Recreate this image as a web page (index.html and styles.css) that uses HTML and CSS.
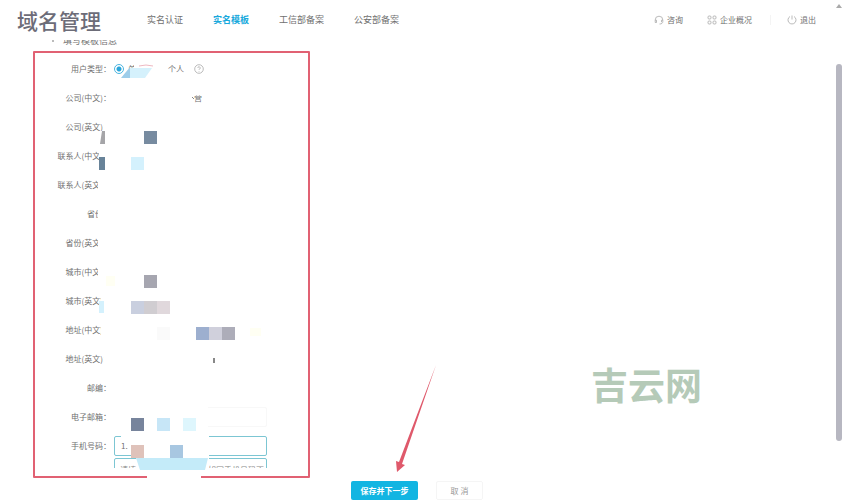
FILE: index.html
```
<!DOCTYPE html>
<html lang="zh-CN">
<head>
  <meta charset="UTF-8">
  <meta name="viewport" content="width=device-width, initial-scale=1.0">
  <title>域名管理 - 实名模板</title>
  <link rel="stylesheet" href="styles.css">
</head>
<body>
  <header class="header">
    <h1 class="logo">域名管理</h1>
    <nav class="nav">
      <a href="#">实名认证</a>
      <a href="#" class="active">实名模板</a>
      <a href="#">工信部备案</a>
      <a href="#">公安部备案</a>
    </nav>
    <div class="tools">
      <a href="#">
        <svg class="icon" viewBox="0 0 10 10"><path d="M2.500 7.500H1.200V5a3.800 3.800 0 0 1 7.600 0v1.500C8.800 8.300 7.500 9 5.500 9M1.200 5.200h1.300v2.300M8.800 5.200H7.500v2"/></svg>
        咨询
      </a>
      <a href="#">
        <svg class="icon" viewBox="0 0 10 10"><rect x="1" y="1" width="3" height="3" rx="1"/><rect x="6" y="1" width="3" height="3" rx="1"/><rect x="1" y="6" width="3" height="3" rx="1"/><rect x="6" y="6" width="3" height="3" rx="1"/></svg>
        企业概况
      </a>
      <span class="divider"></span>
      <a href="#">
        <svg class="icon" viewBox="0 0 10 10"><path d="M3 1.500a4 4 0 1 0 4 0M5 .5v4"/></svg>
        退出
      </a>
    </div>
  </header>

  <main class="main">
    <form class="form" id="templateForm">
      <div class="scroll">
        <h2 class="title">填写模板信息</h2>
        <div class="rows">
          <div class="row">
            <span class="label">用户类型：</span>
            <div class="radios">
              <label><input type="radio" name="type" checked>单位</label>
              <label><input type="radio" name="type">个人</label>
              <svg class="icon" viewBox="0 0 10 10"><circle cx="5" cy="5" r="4.300"/><path d="M3.800 4a1.200 1.200 0 1 1 1.800 1Q5 5.300 5 6M5 7v.6"/></svg>
            </div>
          </div>
          <div class="row"><label class="label" for="companyCn">公司(中文)：</label><input class="field company" id="companyCn" type="text" value="营"></div>
          <div class="row"><label class="label" for="companyEn">公司(英文)：</label><input class="field" id="companyEn" type="text"></div>
          <div class="row"><label class="label" for="contactCn">联系人(中文)：</label><input class="field" id="contactCn" type="text"></div>
          <div class="row"><label class="label" for="contactEn">联系人(英文)：</label><input class="field" id="contactEn" type="text"></div>
          <div class="row"><label class="label" for="province">省份：</label><input class="field" id="province" type="text"></div>
          <div class="row"><label class="label" for="provinceEn">省份(英文)：</label><input class="field" id="provinceEn" type="text"></div>
          <div class="row"><label class="label" for="cityCn">城市(中文)：</label><input class="field" id="cityCn" type="text"></div>
          <div class="row"><label class="label" for="cityEn">城市(英文)：</label><input class="field" id="cityEn" type="text"></div>
          <div class="row"><label class="label" for="addressCn">地址(中文)：</label><input class="field" id="addressCn" type="text"></div>
          <div class="row"><label class="label" for="addressEn">地址(英文)：</label><input class="field" id="addressEn" type="text"></div>
          <div class="row"><label class="label" for="zip">邮编：</label><input class="field" id="zip" type="text"></div>
          <div class="row"><label class="label" for="email">电子邮箱：</label><input class="field email" id="email" type="text"></div>
          <div class="row"><label class="label" for="phone">手机号码：</label><input class="field focus" id="phone" type="text" value="1."></div>
        </div>
        <div class="hint"><p>请填写真实有效的号码，如同手机号码不</p></div>
      </div>

      <!-- redaction blocks and the red frame -->
      <svg class="marks" viewBox="0 0 320 460">
        <g fill="#fff">
          <path d="M134 22h32v16h-36l-6-3v-5h10zM188 50h16v5h-16z"/>
          <path d="M104 78V91H99V130H98V250L101 256V305L104 308V334H112V78z"/>
          <path d="M112 364H208V391H112z"/>
          <path d="M121 395H209V438H136V412H130V399H121z"/>
        </g>
        <path fill="#9dcdea" d="M121 38l9-11v11z"/>
        <path fill="#d5f1fc" d="M130 28h22l-7 10h-15z"/>
        <path fill="none" stroke="#efb9c2" d="M139 26q7-2 14 0"/>
        <path fill="none" stroke="#888" d="M192 57l2 2"/>
        <path fill="#a5a5a8" d="M102 91h3v13h-5z"/>
        <path fill="#778ba0" d="M144 91h13v13h-13z"/>
        <path fill="#688399" d="M99 117h6v13h-6z"/>
        <path fill="#d4f1fd" d="M131 117h13v13h-13z"/>
        <path fill="#a6a6b0" d="M144 235h13v13h-13z"/>
        <path fill="#d4f1fd" d="M99 261h5v12h-5z"/>
        <path fill="#c9cfdf" d="M131 261h13v13h-13z"/>
        <path fill="#d0cdd1" d="M144 261h13v13h-13z"/>
        <path fill="#e0d8dc" d="M157 261h13v13h-13z"/>
        <path fill="#fafafa" d="M157 287h13v13h-13z"/>
        <path fill="#9dafcf" d="M196 287h13v13h-13z"/>
        <path fill="#d0d0dc" d="M209 287h13v13h-13z"/>
        <path fill="#adadb9" d="M222 287h13v13h-13z"/>
        <path fill="#fffff3" d="M250 288h11v8h-11zM106 236h9v10h-9z"/>
        <path fill="#888" d="M213 318h2v5h-2z"/>
        <path fill="#77849c" d="M131 378h13v13h-13z"/>
        <path fill="#c7e6f7" d="M157 378h13v13h-13z"/>
        <path fill="#def6fd" d="M183 378h13v13h-13z"/>
        <path fill="#dfc2ba" d="M131 405h13v13h-13z"/>
        <path fill="#a8c7e1" d="M170 405h13v13h-13z"/>
        <path fill="#c4ebf9" d="M136 418h72l-3 12h-65z"/>
        <path fill="none" stroke="#e16173" stroke-width="2" stroke-linejoin="round" d="M147 437H34V12H309V437H201"/>
      </svg>
    </form>

    <div class="buttons">
      <button type="submit" form="templateForm" class="save">保存并下一步</button>
      <button type="button" class="cancel">取 消</button>
    </div>
  </main>

  <svg class="arrow" viewBox="0 0 44 110">
    <path fill="#df596b" d="M43 2L9 101l3 1-8 7-1-11 3 1z"/>
  </svg>
  <div class="watermark">吉云网</div>
  <div class="scrollbar"><span class="up"></span><span class="thumb"></span></div>
</body>
</html>
```
FILE: styles.css
```
* {
  box-sizing: border-box;
}

body {
  margin: 0;
  height: 100vh;
  overflow: hidden;
  display: flex;
  flex-direction: column;
  background: #fff;
  color: #707070;
  font-family: "Noto Sans CJK SC", sans-serif;
  font-size: 8px;
  line-height: 12px;
}

a {
  color: inherit;
  text-decoration: none;
}

.header {
  flex: none;
  height: 40px;
  padding: 0 27px 0 17px;
  display: flex;
  align-items: center;
  background: #fff;
}

.logo {
  margin: 0;
  font-size: 21px;
  line-height: 40px;
  font-weight: 500;
  color: #6c6c78;
}

.nav {
  margin-left: 46px;
  display: flex;
  gap: 30px;
  font-size: 9px;
}

.nav .active {
  color: #18a9dc;
  font-weight: 700;
}

.tools {
  margin-left: auto;
  display: flex;
  align-items: center;
}

.tools a {
  display: flex;
  align-items: center;
  gap: 3px;
  margin-left: 24px;
}

.icon {
  width: 10px;
  height: 10px;
  fill: none;
  stroke: #aaa;
  stroke-width: 0.8;
}

.divider {
  width: 1px;
  height: 10px;
  margin-left: 18px;
  margin-right: -8px;
  background: #f4f4f4;
}

.main {
  flex: 1;
  min-height: 0;
}

.form {
  position: relative;
}

.scroll {
  height: 428px;
  overflow: hidden;
}

.title {
  margin: -5px 0 0 52px;
  display: flex;
  align-items: center;
  gap: 9px;
  font-size: 9px;
  line-height: 12px;
  font-weight: 400;
}

.title::before {
  content: "";
  width: 2px;
  height: 2px;
  background: #bbb;
}

.rows {
  padding-top: 7px;
}

.row {
  display: flex;
  align-items: center;
  height: 29px;
}

.label {
  width: 111px;
  margin-right: 3px;
  text-align: right;
}

.field {
  width: 153px;
  height: 20px;
  padding: 0 6px;
  border: 1px solid transparent;
  border-radius: 2px;
  background: #fff;
  color: #707070;
  font: inherit;
  outline: none;
}

.company {
  padding-left: 79px;
}

.email {
  border-color: #f8f8f8;
}

.focus {
  border-color: #7cc6d3;
}

.radios,
.radios label {
  display: flex;
  align-items: center;
}

.radios label {
  gap: 4px;
  margin-right: 10px;
}

.radios input {
  appearance: none;
  width: 10px;
  height: 10px;
  margin: 0;
  border: 1px solid #ccc;
  border-radius: 50%;
}

.radios input:checked {
  border-color: #4ab5e0;
  background: radial-gradient(#2aa5da 2px, #fff 3px);
}

.hint {
  width: 153px;
  height: 20px;
  margin: -2px 0 0 114px;
  padding: 5px;
  border: 1px solid #7cc6d3;
  border-radius: 2px;
}

.hint p {
  margin: 0;
  color: #888;
  white-space: nowrap;
}

.marks {
  position: absolute;
  left: 0;
  top: 0;
  width: 320px;
  height: 460px;
  pointer-events: none;
}

.buttons {
  display: flex;
  gap: 18px;
  padding: 13px 0 0 351px;
}

.buttons button {
  height: 19px;
  padding: 0;
  border-radius: 2px;
  font: inherit;
}

.save {
  width: 67px;
  border: 0;
  background: #12b5e2;
  color: #fff;
}

.buttons .save {
  font-weight: 700;
}

.cancel {
  width: 47px;
  border: 1px solid #f5f5f5;
  background: #fff;
  color: #999;
}

.arrow {
  position: absolute;
  left: 393px;
  top: 363px;
  width: 44px;
  height: 110px;
}

.watermark {
  position: absolute;
  right: 141px;
  bottom: 96px;
  color: #b5cab8;
  font-size: 37px;
  line-height: 40px;
  font-weight: 700;
}

.scrollbar {
  position: absolute;
  right: 1px;
  top: 0;
  width: 6px;
  height: 100%;
  padding-top: 4px;
}

.up {
  display: block;
  border: 3px solid transparent;
  border-top: 0;
  border-bottom: 4px solid #aaa;
}

.thumb {
  display: block;
  height: 76%;
  margin-top: 56px;
  border-radius: 3px;
  background: #b7b7c1;
}
```
